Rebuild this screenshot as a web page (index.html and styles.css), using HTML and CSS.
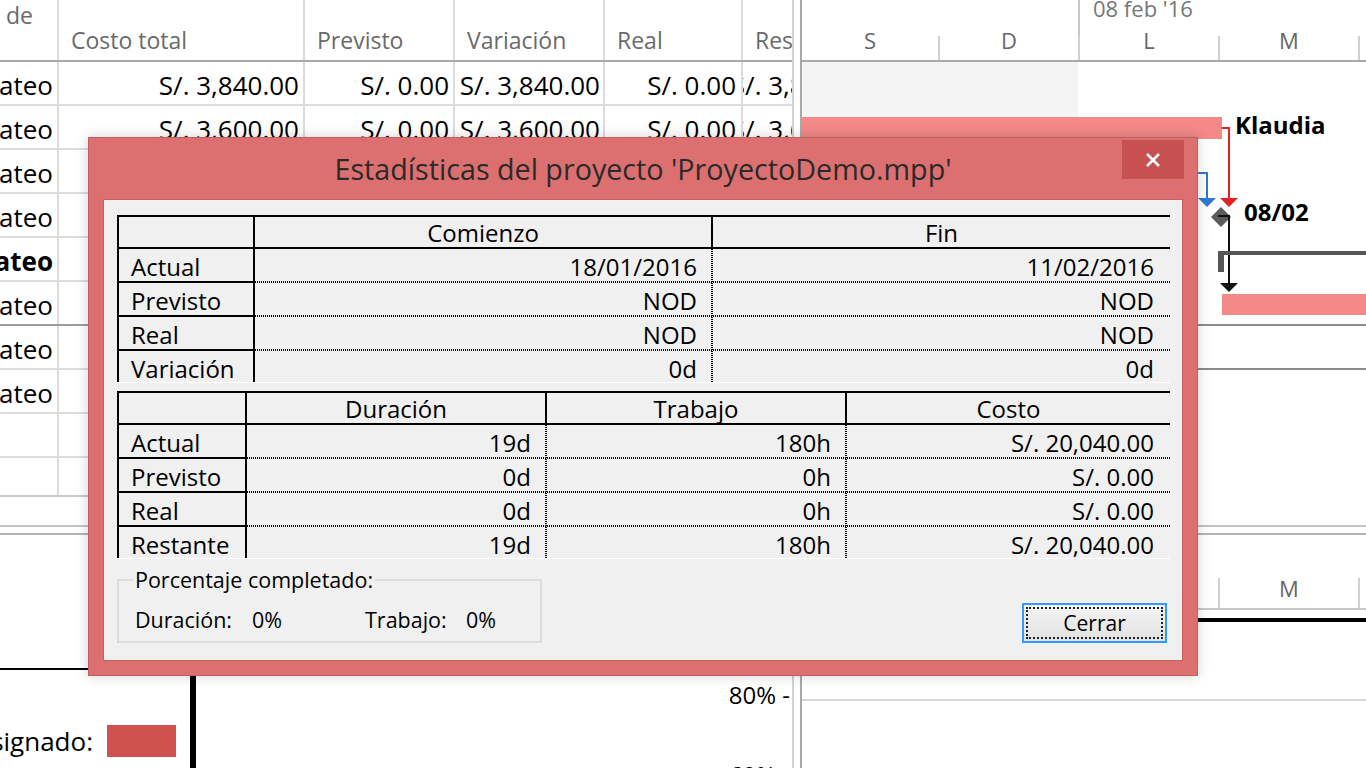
FILE: index.html
```html
<!DOCTYPE html>
<html lang="es">
<head>
<meta charset="utf-8">
<title>Estadísticas del proyecto</title>
<link rel="stylesheet" href="styles.css">
</head>
<body>
<div class="app">
  <section class="view view-top">
    <div class="pane-left">
      <div class="sheet">
        <div class="srow shead">
          <div class="sc w0 h0"><span>Asignación de</span></div>
          <div class="sc w1">Costo total</div>
          <div class="sc w2">Previsto</div>
          <div class="sc w3">Variación</div>
          <div class="sc w4">Real</div>
          <div class="sc w5">Restante</div>
        </div>
        <div class="srow"><div class="sc w0">Prorrateo</div><div class="sc w1">S/. 3,840.00</div><div class="sc w2">S/. 0.00</div><div class="sc w3">S/. 3,840.00</div><div class="sc w4">S/. 0.00</div><div class="sc w5">S/. 3,840.00</div></div>
        <div class="srow"><div class="sc w0">Prorrateo</div><div class="sc w1">S/. 3,600.00</div><div class="sc w2">S/. 0.00</div><div class="sc w3">S/. 3,600.00</div><div class="sc w4">S/. 0.00</div><div class="sc w5">S/. 3,600.00</div></div>
        <div class="srow"><div class="sc w0">Prorrateo</div><div class="sc w1">S/. 2,400.00</div><div class="sc w2">S/. 0.00</div><div class="sc w3">S/. 2,400.00</div><div class="sc w4">S/. 0.00</div><div class="sc w5">S/. 2,400.00</div></div>
        <div class="srow"><div class="sc w0">Prorrateo</div><div class="sc w1">S/. 2,000.00</div><div class="sc w2">S/. 0.00</div><div class="sc w3">S/. 2,000.00</div><div class="sc w4">S/. 0.00</div><div class="sc w5">S/. 2,000.00</div></div>
        <div class="srow bold"><div class="sc w0">Prorrateo</div><div class="sc w1">S/. 4,200.00</div><div class="sc w2">S/. 0.00</div><div class="sc w3">S/. 4,200.00</div><div class="sc w4">S/. 0.00</div><div class="sc w5">S/. 4,200.00</div></div>
        <div class="srow dark"><div class="sc w0">Prorrateo</div><div class="sc w1">S/. 1,600.00</div><div class="sc w2">S/. 0.00</div><div class="sc w3">S/. 1,600.00</div><div class="sc w4">S/. 0.00</div><div class="sc w5">S/. 1,600.00</div></div>
        <div class="srow"><div class="sc w0">Prorrateo</div><div class="sc w1">S/. 1,200.00</div><div class="sc w2">S/. 0.00</div><div class="sc w3">S/. 1,200.00</div><div class="sc w4">S/. 0.00</div><div class="sc w5">S/. 1,200.00</div></div>
        <div class="srow"><div class="sc w0">Prorrateo</div><div class="sc w1">S/. 1,200.00</div><div class="sc w2">S/. 0.00</div><div class="sc w3">S/. 1,200.00</div><div class="sc w4">S/. 0.00</div><div class="sc w5">S/. 1,200.00</div></div>
        <div class="srow"><div class="sc w0"></div><div class="sc w1"></div><div class="sc w2"></div><div class="sc w3"></div><div class="sc w4"></div><div class="sc w5"></div></div>
        <div class="srow"><div class="sc w0"></div><div class="sc w1"></div><div class="sc w2"></div><div class="sc w3"></div><div class="sc w4"></div><div class="sc w5"></div></div>
      </div>
    </div>
    <div class="vsplit"></div>
    <div class="gantt">
      <div class="tscale">
        <div class="tier1"><div class="t1-pad"></div><div class="t1-week">08 feb '16</div></div>
        <div class="tier2"><div class="day">S</div><div class="day">D</div><div class="day">L</div><div class="day">M</div><div class="day">X</div></div>
      </div>
      <div class="chart">
        <div class="grow"></div><div class="grow"></div><div class="grow"></div>
        <div class="grow"></div><div class="grow"></div><div class="grow rule"></div>
        <div class="grow rule"></div><div class="grow"></div><div class="grow"></div>
        <div class="gbar bar-a"></div>
        <div class="gbar bar-b"></div>
        <svg class="links" width="564" height="463" viewBox="0 0 564 463">
          <path d="M420 66 H427 V137" fill="none" stroke="#e02424" stroke-width="2"/>
          <polygon points="418,136 436,136 427,145" fill="#e02424"/>
          <path d="M380 111 H405 V137" fill="none" stroke="#2f79d3" stroke-width="2"/>
          <polygon points="396,136 414,136 405,145" fill="#2f79d3"/>
          <polygon points="419,145 429,155 419,165 409,155" fill="#5b5b5b"/>
          <path d="M416 154 H427 V222" fill="none" stroke="#111" stroke-width="2"/>
          <polygon points="418,221 436,221 427,230" fill="#111"/>
          <rect x="416" y="189" width="148" height="4" fill="#555"/>
          <rect x="416" y="189" width="6" height="21" fill="#555"/>
        </svg>
        <div class="glabel lbl-klaudia">Klaudia</div>
        <div class="glabel lbl-date">08/02</div>
      </div>
    </div>
  </section>
  <div class="hsplit"></div>
  <section class="view view-bottom">
    <div class="pane-left graph">
      <div class="graph-top"></div>
      <div class="graph-body">
        <div class="legend"><span class="legend-text">Trabajo asignado:</span><span class="swatch"></span></div>
        <div class="axis"></div>
        <div class="scale"><div class="tick">80% -</div><div class="tick tick-2">60% -</div></div>
      </div>
    </div>
    <div class="vsplit"></div>
    <div class="gantt">
      <div class="tscale low">
        <div class="tier1"><div class="t1-pad"></div><div class="t1-week">08 feb '16</div></div>
        <div class="tier2"><div class="day">S</div><div class="day">D</div><div class="day">L</div><div class="day">M</div><div class="day">X</div></div>
      </div>
      <div class="low-chart">
        <div class="bar-line"></div>
        <div class="rule-line"></div>
      </div>
    </div>
  </section>
</div>

<div class="dialog" role="dialog" aria-label="Estadísticas del proyecto">
  <div class="titlebar">
    <h1 class="title">Estadísticas del proyecto 'ProyectoDemo.mpp'</h1>
    <button class="close" aria-label="Cerrar">
      <svg width="16" height="16" viewBox="0 0 16 16"><path d="M2 2 L14 14 M14 2 L2 14" stroke="#fff" stroke-width="2.6" fill="none"/></svg>
    </button>
  </div>
  <div class="client">
    <div class="stats dates">
      <div class="cell lab hrow"></div>
      <div class="cell hd hrow">Comienzo</div>
      <div class="cell hd hrow end">Fin</div>

      <div class="cell lab">Actual</div>
      <div class="cell val">18/01/2016</div>
      <div class="cell val end">11/02/2016</div>

      <div class="cell lab">Previsto</div>
      <div class="cell val">NOD</div>
      <div class="cell val end">NOD</div>

      <div class="cell lab">Real</div>
      <div class="cell val">NOD</div>
      <div class="cell val end">NOD</div>

      <div class="cell lab last">Variación</div>
      <div class="cell val last">0d</div>
      <div class="cell val last end">0d</div>
    </div>

    <div class="stats totals">
      <div class="cell lab hrow"></div>
      <div class="cell hd hrow">Duración</div>
      <div class="cell hd hrow">Trabajo</div>
      <div class="cell hd hrow end">Costo</div>

      <div class="cell lab">Actual</div>
      <div class="cell val">19d</div>
      <div class="cell val">180h</div>
      <div class="cell val end">S/. 20,040.00</div>

      <div class="cell lab">Previsto</div>
      <div class="cell val">0d</div>
      <div class="cell val">0h</div>
      <div class="cell val end">S/. 0.00</div>

      <div class="cell lab">Real</div>
      <div class="cell val">0d</div>
      <div class="cell val">0h</div>
      <div class="cell val end">S/. 0.00</div>

      <div class="cell lab last">Restante</div>
      <div class="cell val last">19d</div>
      <div class="cell val last">180h</div>
      <div class="cell val last end">S/. 20,040.00</div>
    </div>

    <div class="footer">
      <fieldset class="group">
        <legend>Porcentaje completado:</legend>
        <span>Duración:</span><span>0%</span><span>Trabajo:</span><span>0%</span>
      </fieldset>
      <button class="btn"><span>Cerrar</span></button>
    </div>
  </div>
</div>
</body>
</html>
```

FILE: styles.css
```css
* { box-sizing: border-box; }
html, body { margin: 0; padding: 0; }
body {
  width: 1366px;
  height: 768px;
  overflow: hidden;
  position: relative;
  background: #fff;
  color: #000;
  font-family: "Open Sans", "Noto Sans", "DejaVu Sans", sans-serif;
}

.app { display: flex; flex-direction: column; height: 768px; }
.view { display: flex; }
.view-top { height: 525px; flex: none; }
.view-bottom { flex: 1; min-height: 0; }
.hsplit {
  height: 10px; flex: none;
  border-top: 2px solid #c4c4c4;
  border-bottom: 2px solid #b4b4b4;
  background: #fff;
}
.pane-left { width: 792px; flex: none; overflow: hidden; }
.vsplit {
  width: 10px; flex: none;
  border-left: 2px solid #d2d2d2;
  border-right: 2px solid #a8a8a8;
  background: #fff;
}
.gantt { flex: 1; min-width: 0; overflow: hidden; position: relative; }

/* ---------- sheet ---------- */
.sheet { height: 497px; overflow: hidden; border-bottom: 2px solid #c8c8c8; }
.srow { display: flex; height: 44px; flex: none; border-bottom: 2px solid #dcdcdc; }
.srow.dark { border-bottom-color: #9c9c9c; }
.srow.bold .w0 { font-weight: 700; }
.sc {
  flex: none;
  border-right: 2px solid #dcdcdc;
  overflow: hidden;
  white-space: nowrap;
  display: flex;
  align-items: center;
  justify-content: flex-end;
  padding: 3px 4px 0 0;
  font-size: 26px;
}
.w0 { width: 59px; }
.w1 { width: 246px; }
.w2 { width: 150px; }
.w3 { width: 150px; padding-right: 3px; }
.w4 { width: 138px; padding-right: 5px; }
.w5 { width: 128px; padding-right: 0; border-right: 0; }

.shead { height: 62px; border-bottom: 2px solid #a9a9a9; }
.shead .sc {
  font-size: 23px;
  color: #6a6a6a;
  justify-content: flex-start;
  align-items: flex-end;
  line-height: 30px;
  padding: 0 0 5px 12px;
}
.shead .h0 { justify-content: flex-end; align-items: flex-start; padding: 0 24px 0 0; }

/* ---------- timescale ---------- */
.tier1 { display: flex; height: 36px; }
.t1-pad { width: 276px; flex: none; }
.t1-week {
  flex: 1;
  border-left: 2px solid #c8c8c8;
  padding-left: 13px;
  font-size: 22px;
  line-height: 16px;
  color: #777;
  white-space: nowrap;
}
.tier2 { display: flex; height: 26px; border-bottom: 2px solid #a9a9a9; }
.day {
  flex: none;
  width: 140px;
  border-right: 2px solid #d0d0d0;
  display: flex;
  justify-content: center;
  font-size: 22px;
  line-height: 8px;
  color: #666;
}
.day:first-child { width: 138px; }

.low .tier1 { height: 43px; }
.low .tier2 { height: 32px; border-bottom-color: #c8c8c8; }
.low .day { line-height: 20px; }

/* ---------- chart ---------- */
.chart {
  position: relative;
  height: 463px;
  background: linear-gradient(90deg, #f4f4f4 0 276px, #fff 276px);
}
.grow { height: 44px; }
.grow.rule { border-bottom: 2px solid #8c8c8c; }
.gbar { position: absolute; background: #f38989; }
.bar-a { left: 0; top: 55px; width: 420px; height: 22px; }
.bar-b { left: 420px; right: 0; top: 232px; height: 21px; }
.links { position: absolute; left: 0; top: 0; }
.glabel {
  position: absolute;
  font-size: 24px;
  font-weight: 700;
  line-height: 30px;
  white-space: nowrap;
}
.lbl-klaudia { left: 433px; top: 48px; }
.lbl-date { left: 442px; top: 135px; }

.low-chart { position: relative; }
.bar-line { height: 4px; margin-top: 8px; background: #000; }
.rule-line { height: 2px; margin-top: 77px; background: #d8d8d8; }

/* ---------- lower graph ---------- */
.graph { display: flex; flex-direction: column; }
.graph-top { height: 133px; flex: none; }
.graph-body { flex: 1; display: flex; }
.legend {
  width: 190px;
  flex: none;
  border-top: 2px solid #000;
  display: flex;
  justify-content: flex-end;
  align-items: flex-start;
  padding: 55px 14px 0 0;
}
.legend-text { font-size: 26px; line-height: 32px; white-space: nowrap; margin-right: 14px; }
.swatch { width: 69px; height: 32px; flex: none; background: #d15050; }
.axis { width: 6px; flex: none; background: #000; }
.scale {
  flex: 1;
  display: flex;
  flex-direction: column;
  align-items: flex-end;
  padding: 13px 2px 0 0;
  font-size: 24px;
  line-height: 28px;
}
.tick-2 { margin-top: 52px; }

/* ---------- dialog ---------- */
.dialog {
  position: absolute;
  left: 88px;
  top: 137px;
  width: 1110px;
  height: 539px;
  background: #dc7070;
  border: 1px solid #c35e5e;
  box-shadow: 0 0 12px rgba(0, 0, 0, 0.18);
  display: flex;
  flex-direction: column;
}
.titlebar { height: 61px; flex: none; position: relative; }
.title {
  margin: 0;
  font-size: 28.7px;
  font-weight: 400;
  line-height: 61px;
  text-align: center;
  color: #2a2a2a;
  white-space: nowrap;
}
.close {
  position: absolute;
  right: 13px;
  top: 2px;
  width: 62px;
  height: 39px;
  border: 0;
  padding: 0;
  background: #c75050;
  display: flex;
  align-items: center;
  justify-content: center;
}
.client {
  flex: 1;
  margin: 0 14px 14px;
  background: #f0f0f0;
  border: 1px solid #c96060;
  padding: 15px 0 0 13px;
}

.stats {
  display: grid;
  width: 1053px;
  border-top: 2px solid #000;
  border-bottom: 1px solid #fff;
  grid-template-rows: 32px 34px 34px 34px 31px;
  font-size: 24px;
}
.dates { grid-template-columns: 138px 458px 1fr; }
.totals { margin-top: 8px; grid-template-columns: 130px 300px 300px 1fr; }

.cell { overflow: hidden; white-space: nowrap; line-height: 30px; }
.lab {
  border-left: 2px solid #000;
  border-right: 2px solid #000;
  border-bottom: 2px solid #000;
  padding: 3px 0 0 12px;
}
.lab.hrow { padding: 0; }
.lab.last { border-bottom: 0; }
.hd {
  border-bottom: 2px solid #000;
  border-right: 2px solid #000;
  text-align: center;
  padding-top: 1px;
}
.hd.end { border-right: 0; }
.val {
  text-align: right;
  padding: 3px 16px 0 0;
  background-image:
    repeating-linear-gradient(90deg, #000 0 1px, transparent 1px 2px),
    repeating-linear-gradient(180deg, #000 0 1px, transparent 1px 2px);
  background-size: 100% 2px, 2px 100%;
  background-position: left bottom, right top;
  background-repeat: no-repeat;
}
.val.end { background-size: 100% 2px, 0 0; }
.val.last { background-size: 0 0, 2px 100%; }
.val.last.end { background-image: none; }

.footer {
  width: 1053px;
  margin-top: 8px;
  display: flex;
  justify-content: space-between;
  align-items: flex-end;
}
.group {
  margin: 0;
  width: 425px;
  border: 2px solid #dcdcdc;
  padding: 14px 0 8px 16px;
  display: grid;
  grid-template-columns: 117px 113px 101px auto;
  font-size: 21.5px;
  line-height: 26px;
}
.group legend {
  padding: 0 2px;
  margin-left: -2px;
  font-size: 21.5px;
  line-height: 26px;
}
.btn {
  width: 145px;
  height: 40px;
  margin-right: 3px;
  border: 2px solid #3399ff;
  background: linear-gradient(#f3f3f3, #e3e3e3);
  padding: 2px;
  font-family: inherit;
  font-size: 21px;
  color: #000;
}
.btn span {
  display: flex;
  height: 100%;
  align-items: center;
  justify-content: center;
  border: 2px dotted #222;
}
```
